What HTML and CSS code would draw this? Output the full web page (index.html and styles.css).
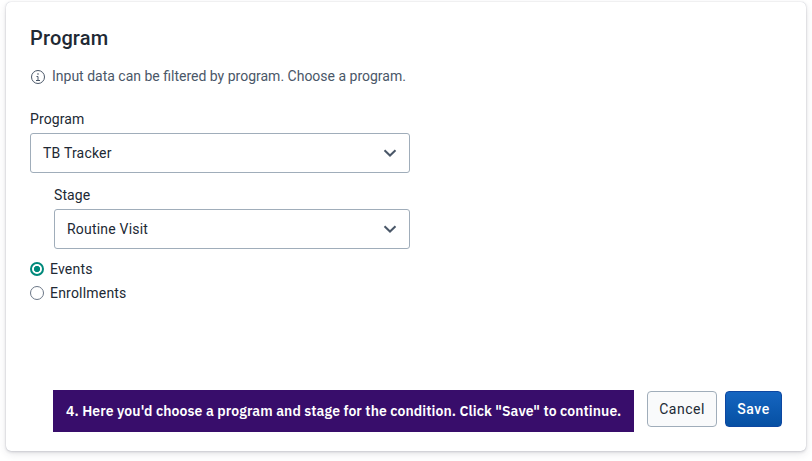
FILE: index.html
```html
<!DOCTYPE html>
<html lang="en">
<head>
<meta charset="utf-8">
<title>Program</title>
<link rel="stylesheet" href="styles.css">
</head>
<body>
<main class="card">
  <h1 class="title">Program</h1>
  <p class="hint">
    <svg class="hint-icon" viewBox="0 0 16 16" width="16" height="16"><circle cx="8" cy="8" r="6.5"/><path d="M6.5 7.5H8v4M6 11.5h4"/><circle class="dot" cx="8" cy="5" r=".8"/></svg>
    <span>Input data can be filtered by program. Choose a program.</span>
  </p>
  <div class="field">
    <span class="label">Program</span>
    <div class="select"><span>TB Tracker</span><svg class="chevron" viewBox="0 0 14 10" width="14" height="10"><path d="M1.5 2.2 7 7.5l5.5-5.3"/></svg></div>
  </div>
  <div class="field nested">
    <span class="label">Stage</span>
    <div class="select"><span>Routine Visit</span><svg class="chevron" viewBox="0 0 14 10" width="14" height="10"><path d="M1.5 2.2 7 7.5l5.5-5.3"/></svg></div>
  </div>
  <div class="radios">
    <label class="radio"><span class="ring checked"></span><span>Events</span></label>
    <label class="radio"><span class="ring"></span><span>Enrollments</span></label>
  </div>
  <footer class="actions">
    <div class="callout">4. Here you'd choose a program and stage for the condition. Click "Save" to continue.</div>
    <button class="button cancel">Cancel</button>
    <button class="button save">Save</button>
  </footer>
</main>
</body>
</html>
```
FILE: styles.css
```css
* { box-sizing: border-box; }
body {
  margin: 0;
  padding: 2px 6px 10px;
  height: 461px;
  overflow: hidden;
  background: #fff;
  color: #212934;
  font: 14px/20px Roboto, "Liberation Sans", sans-serif;
}
.card {
  display: flex;
  flex-direction: column;
  width: 800px;
  height: 449px;
  padding: 24px;
  background: #fff;
  border-radius: 5px;
  box-shadow: 0 0 1px rgba(64, 75, 105, .35), 0 3px 8px -1px rgba(50, 50, 71, .14), 0 1px 3px rgba(50, 50, 71, .16);
}
.title {
  margin: 0;
  font-size: 20px;
  line-height: 24px;
  font-weight: 500;
  letter-spacing: .15px;
}
.hint {
  display: flex;
  align-items: center;
  gap: 6px;
  height: 20px;
  margin: 16px 0 0;
  color: #4a5768;
}
.hint-icon { fill: none; stroke: #4a5768; stroke-width: 1; margin-top: 1px; }
.hint-icon .dot { fill: #4a5768; stroke: none; }
.field { width: 380px; margin-top: 23px; letter-spacing: .2px; }
.label { display: block; height: 20px; margin-bottom: 4px; letter-spacing: .1px; }
.nested { width: 356px; margin: 12px 0 0 24px; }
.select {
  display: flex;
  align-items: center;
  justify-content: space-between;
  height: 40px;
  padding: 0 12px;
  border: 1px solid #a0adba;
  border-radius: 3px;
}
.chevron { fill: none; stroke: #4a5768; stroke-width: 2; }
.radios { margin-top: 8px; letter-spacing: .2px; }
.radio { display: flex; align-items: center; gap: 6px; height: 24px; }
.ring {
  width: 14px;
  height: 14px;
  border: 1px solid #6c7787;
  border-radius: 50%;
}
.ring.checked {
  border: 2px solid #00897b;
  background: radial-gradient(circle, #00897b 2.8px, #fff 3.4px);
}
.actions {
  display: flex;
  align-items: flex-start;
  margin: auto -1px -5px 23px;
}
.callout {
  width: 581px;
  height: 42px;
  margin-right: 13px;
  padding-left: 13px;
  background: #380d6b;
  color: #fff;
  font: 600 14px/42px "IBM Plex Sans", "Noto Sans", sans-serif;
  letter-spacing: .09px;
  white-space: nowrap;
}
.button {
  height: 36px;
  margin-top: 1px;
  padding: 0;
  border-radius: 4px;
  font: 14px/20px Roboto, sans-serif;
  letter-spacing: .5px;
}
.cancel { width: 70px; margin-right: 8px; border: 1px solid #a0adba; background: #f9fafb; color: #212934; }
.save { width: 57px; border: 1px solid #0d47a1; background: linear-gradient(#1565c0, #0650a3); color: #fff; font-weight: 500; }
```
